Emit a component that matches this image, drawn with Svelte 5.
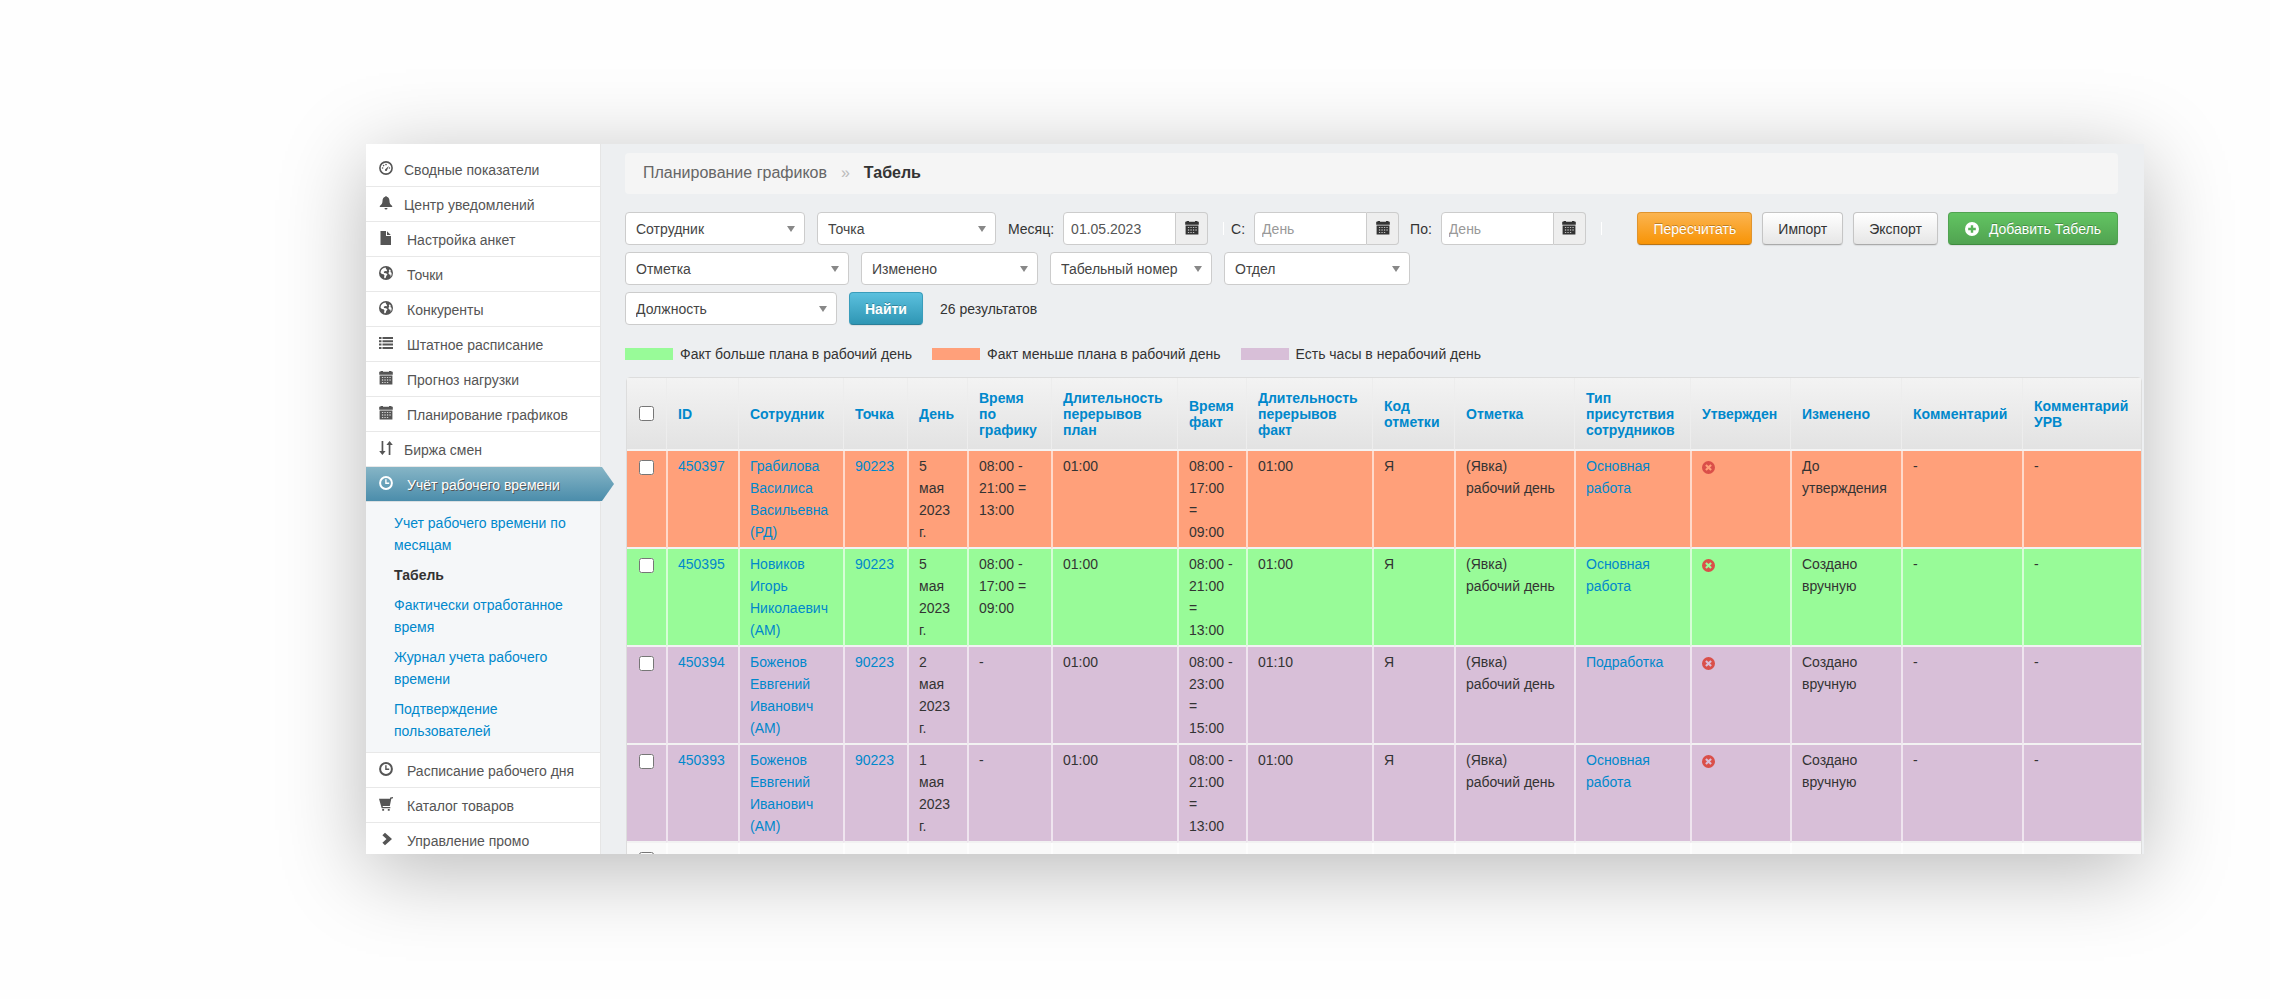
<script lang="ts">
  type Item = { icon: string; label: string; tight?: boolean };
  type Line = {
    id: string;
    tone: string;
    name: string;
    day: string;
    plan: string;
    fact: string;
    factBreak: string;
    kind: string;
    changed: string;
  };

  const before: Item[] = [
    { icon: "gauge", label: "Сводные показатели", tight: true },
    { icon: "bell", label: "Центр уведомлений", tight: true },
    { icon: "file", label: "Настройка анкет" },
    { icon: "globe", label: "Точки" },
    { icon: "globe", label: "Конкуренты" },
    { icon: "list", label: "Штатное расписание" },
    { icon: "calendar", label: "Прогноз нагрузки" },
    { icon: "calendar", label: "Планирование графиков" },
    { icon: "sort", label: "Биржа смен", tight: true },
  ];

  const after: Item[] = [
    { icon: "clock", label: "Расписание рабочего дня" },
    { icon: "cart", label: "Каталог товаров" },
    { icon: "chevron", label: "Управление промо" },
  ];

  const submenu = [
    "Учет рабочего времени по месяцам",
    "Табель",
    "Фактически отработанное время",
    "Журнал учета рабочего времени",
    "Подтверждение пользователей",
  ];

  const legend = [
    { tone: "green", text: "Факт больше плана в рабочий день" },
    { tone: "orange", text: "Факт меньше плана в рабочий день" },
    { tone: "purple", text: "Есть часы в нерабочий день" },
  ];

  const secondRow = [
    { label: "Отметка", width: 224 },
    { label: "Изменено", width: 177 },
    { label: "Табельный номер", width: 162 },
    { label: "Отдел", width: 186 },
  ];

  // first column is the checkbox, it has no title
  const columns = [
    { title: "", width: 39 },
    { title: "ID", width: 72 },
    { title: "Сотрудник", width: 105 },
    { title: "Точка", width: 64 },
    { title: "День", width: 60 },
    { title: "Время\nпо\nграфику", width: 84 },
    { title: "Длительность\nперерывов\nплан", width: 126 },
    { title: "Время\nфакт", width: 69 },
    { title: "Длительность\nперерывов\nфакт", width: 126 },
    { title: "Код\nотметки", width: 82 },
    { title: "Отметка", width: 120 },
    { title: "Тип\nприсутствия\nсотрудников", width: 116 },
    { title: "Утвержден", width: 100 },
    { title: "Изменено", width: 111 },
    { title: "Комментарий", width: 121 },
    { title: "Комментарий\nУРВ", width: 119 },
  ];

  const lines: Line[] = [
    {
      id: "450397", tone: "orange", name: "Грабилова\nВасилиса\nВасильевна\n(РД)", day: "5",
      plan: "08:00 -\n21:00 =\n13:00", fact: "08:00 -\n17:00\n=\n09:00", factBreak: "01:00",
      kind: "Основная\nработа", changed: "До\nутверждения",
    },
    {
      id: "450395", tone: "green", name: "Новиков\nИгорь\nНиколаевич\n(АМ)", day: "5",
      plan: "08:00 -\n17:00 =\n09:00", fact: "08:00 -\n21:00\n=\n13:00", factBreak: "01:00",
      kind: "Основная\nработа", changed: "Создано\nвручную",
    },
    {
      id: "450394", tone: "purple", name: "Боженов\nЕввгений\nИванович\n(АМ)", day: "2",
      plan: "-", fact: "08:00 -\n23:00\n=\n15:00", factBreak: "01:10",
      kind: "Подработка", changed: "Создано\nвручную",
    },
    {
      id: "450393", tone: "purple", name: "Боженов\nЕввгений\nИванович\n(АМ)", day: "1",
      plan: "-", fact: "08:00 -\n21:00\n=\n13:00", factBreak: "01:00",
      kind: "Основная\nработа", changed: "Создано\nвручную",
    },
  ];

  let month = $state("01.05.2023");
  let from = $state("");
  let to = $state("");
</script>

{#snippet icon(name: string)}
  <svg class="icon" viewBox="0 0 14 14" aria-hidden="true">
    {#if name === "gauge"}
      <circle cx="7" cy="7" r="6.1" fill="none" stroke="currentColor" stroke-width="1.6" />
      <path d="M6 8.6 9.8 5 7.9 9.4a1 1 0 0 1-1.9-.8z" />
      <circle cx="3.6" cy="7" r=".8" /><circle cx="4.6" cy="4.6" r=".8" />
      <circle cx="7" cy="3.6" r=".8" /><circle cx="10.4" cy="7" r=".8" />
    {:else if name === "bell"}
      <path d="M6.3 .7a.7.7 0 0 1 1.4 0C9.700 1.200 10.400 2.900 10.500 5c.1 2.200.6 3.400 2.700 5v1H.8v-1c2.100-1.600 2.600-2.800 2.700-5 .1-2.100.8-3.800 2.800-4.300zM5.500 12h3a1.500 1.500 0 0 1-3 0z" />
    {:else if name === "file"}
      <path d="M1.500 0H7v5h5v9H1.500zM8 .2 11.800 4H8z" />
    {:else if name === "globe"}
      <path fill-rule="evenodd" d="M7 0a7 7 0 1 1 0 14A7 7 0 0 1 7 0zm-.4 1.500C4 1.700 1.700 3.700 1.500 6.600l1.300 1.300 1.800.3.9 1.400-.5 1.700.9 1.100 1-.9.300-1.600 1.300-1.300-1.300-1.400-2.200-.3-.2-1.100 1.500-.8 1.300.3.600-1.300-1-.8zm4.200 1.700-1 1.200.5 1.300-1 1.200 1 1.500 1.200.4.100 1.900c.8-1 1.200-2.500.9-4l-1.100-.6.4-1.400z" />
    {:else if name === "list"}
      <path d="M0 1h2.500v2H0zm3.500 0H14v2H3.500zM0 4.300h2.500v2H0zm3.500 0H14v2H3.500zM0 7.600h2.500v2H0zm3.500 0H14v2H3.500zM0 10.900h2.500v2H0zm3.500 0H14v2H3.500z" />
    {:else if name === "calendar"}
      <path fill-rule="evenodd" d="M1.500 0h2.500v.8h6V0h2.500v.8h1.300v3H.2v-3h1.300zM.6 4.600h12.800v8.900H.6zm2.300 1.600v.8h1.300v-.8zm2.500 0v.8h1.300v-.8zm2.500 0v.8h1.300v-.8zm2.500 0v.8h1.300v-.8zM2.900 8.600v.8h1.300v-.8zm2.500 0v.8h1.300v-.8zm2.500 0v.8h1.300v-.8zm2.500 0v.8h1.300v-.8zM2.900 11v.8h1.300V11zm2.500 0v.8h1.300V11zm2.500 0v.8h1.300V11z" />
    {:else if name === "sort"}
      <path d="M2.600 0h1.700v10h2.300l-3.200 4-3.200-4h2.400zM9.700 14h1.700V4h2.400l-3.200-4-3.200 4h2.300z" />
    {:else if name === "clock"}
      <circle cx="7" cy="7" r="5.900" fill="none" stroke="currentColor" stroke-width="2" />
      <path d="M6.200 3.300h1.400v3.300h2.600V8h-4z" />
    {:else if name === "cart"}
      <path d="M11.200 .5 14 0v1.300l-1.700.4-1.500 7.200H3.600L3.900 10h7.400v1.200H2.700L0 1.700h10.900zM3.200 12h1.900v1.800H3.200zm5.600 0h1.900v1.800H8.800z" />
    {:else if name === "chevron"}
      <path d="M3.400 3.200 6 .8 13 7l-7 6.200-2.600-2.400L7.500 7z" />
    {:else if name === "plus"}
      <path fill-rule="evenodd" d="M7 0a7 7 0 1 1 0 14A7 7 0 0 1 7 0zM5.800 3.200v2.600H3.200v2.400h2.600v2.600h2.400V8.200h2.600V5.800H8.200V3.200z" />
    {:else if name === "cross"}
      <path fill-rule="evenodd" d="M7 0a7 7 0 1 1 0 14A7 7 0 0 1 7 0zM5 3.400 3.400 5l2 2-2 2L5 10.600l2-2 2 2L10.600 9l-2-2 2-2L9 3.400l-2 2z" />
    {/if}
  </svg>
{/snippet}

{#snippet dropdown(label: string, width: number)}
  <select aria-label={label} style:width="{width}px">
    <option>{label}</option>
  </select>
{/snippet}

{#snippet entry(item: Item)}
  <li>
    <a class="item" class:tight={item.tight} href="#menu">{@render icon(item.icon)}{item.label}</a>
  </li>
{/snippet}

<div class="stage">
  <div class="window">
    <nav class="sidebar">
      <ul>
        {#each before as item}
          {@render entry(item)}
        {/each}
        <li>
          <a class="item active" href="#menu">{@render icon("clock")}Учёт рабочего времени</a>
          <ul class="submenu">
            {#each submenu as title}
              <li><a class:current={title === "Табель"} href="#menu">{title}</a></li>
            {/each}
          </ul>
        </li>
        {#each after as item}
          {@render entry(item)}
        {/each}
      </ul>
    </nav>

    <main>
      <div class="crumbs">
        <a href="#plan">Планирование графиков</a>
        <span class="sep">»</span>
        <b>Табель</b>
      </div>

      <form class="filters" onsubmit={(e) => e.preventDefault()}>
        <div class="row">
          {@render dropdown("Сотрудник", 180)}
          {@render dropdown("Точка", 179)}
          <div class="date">
            <label for="month">Месяц:</label>
            <input id="month" type="text" bind:value={month} />
            <button type="button" class="addon" aria-label="Календарь">{@render icon("calendar")}</button>
          </div>
          <span class="bar"></span>
          <div class="date">
            <label for="from">С:</label>
            <input id="from" type="text" placeholder="День" bind:value={from} />
            <button type="button" class="addon" aria-label="Календарь">{@render icon("calendar")}</button>
          </div>
          <div class="date">
            <label for="to">По:</label>
            <input id="to" type="text" placeholder="День" bind:value={to} />
            <button type="button" class="addon" aria-label="Календарь">{@render icon("calendar")}</button>
          </div>
          <span class="bar"></span>
          <div class="actions">
            <button type="button" class="btn warning">Пересчитать</button>
            <button type="button" class="btn">Импорт</button>
            <button type="button" class="btn">Экспорт</button>
            <button type="button" class="btn success">{@render icon("plus")}Добавить Табель</button>
          </div>
        </div>
        <div class="row">
          {#each secondRow as f}
            {@render dropdown(f.label, f.width)}
          {/each}
        </div>
        <div class="row">
          {@render dropdown("Должность", 212)}
          <button class="btn info">Найти</button>
          <span class="count">26 результатов</span>
        </div>
      </form>

      <div class="legend">
        {#each legend as l}
          <span class="key"><i class={l.tone}></i>{l.text}</span>
        {/each}
      </div>

      <table>
        <colgroup>
          {#each columns as c}
            <col style:width="{c.width}px" />
          {/each}
        </colgroup>
        <thead>
          <tr>
            {#each columns as c}
              <th>
                {#if c.title}
                  <a href="#sort">{c.title}</a>
                {:else}
                  <input type="checkbox" aria-label="Выбрать все" />
                {/if}
              </th>
            {/each}
          </tr>
        </thead>
        <tbody>
          {#each lines as l (l.id)}
            <tr class={l.tone}>
              <td><input type="checkbox" aria-label={l.id} /></td>
              <td><a href="#row">{l.id}</a></td>
              <td><a href="#row">{l.name}</a></td>
              <td><a href="#row">90223</a></td>
              <td>{l.day + "\nмая\n2023\nг."}</td>
              <td>{l.plan}</td>
              <td>01:00</td>
              <td>{l.fact}</td>
              <td>{l.factBreak}</td>
              <td>Я</td>
              <td>{"(Явка)\nрабочий день"}</td>
              <td><a href="#row">{l.kind}</a></td>
              <td class="state">{@render icon("cross")}</td>
              <td>{l.changed}</td>
              <td>-</td>
              <td>-</td>
            </tr>
          {/each}
          <tr>
            {#each columns as c, i}
              <td>{#if i === 0}<input type="checkbox" aria-label="Выбрать" />{/if}</td>
            {/each}
          </tr>
        </tbody>
      </table>
    </main>
  </div>
</div>

<style>
  :global(body) {
    background: #fefefe;
  }
  .stage {
    box-sizing: border-box;
    height: 100vh;
    padding: 144px 126px 145px 366px;
    overflow: hidden;
    font: 14px/22px "Liberation Sans", Arial, sans-serif;
    color: #333;
  }
  .window {
    display: flex;
    height: 100%;
    overflow: hidden;
    background: #edeff1;
    box-shadow: 0 16px 80px rgba(0, 0, 0, 0.28);
  }
  a {
    color: #0088cc;
    text-decoration: none;
  }
  .icon {
    width: 14px;
    height: 14px;
    flex: none;
    fill: currentColor;
  }

  .sidebar {
    flex: none;
    width: 235px;
    box-sizing: border-box;
    padding-top: 8px;
    background: #fff;
    border-right: 1px solid #e5e5e5;
  }
  .sidebar ul {
    list-style: none;
    margin: 0;
    padding: 0;
  }
  .item {
    display: flex;
    align-items: center;
    gap: 14px;
    box-sizing: border-box;
    height: 35px;
    padding: 2px 0 0 13px;
    color: #555;
    border-bottom: 1px solid #e8e8e8;
    white-space: nowrap;
  }
  .item.tight {
    gap: 11px;
  }
  .item .icon {
    margin-bottom: 4px;
  }
  .item.active {
    position: relative;
    z-index: 1;
    height: 34px;
    margin-right: -14px;
    color: #fff;
    border: 0;
    background: linear-gradient(#86b5c6, #4b8dab);
    text-shadow: 1px 1px 0 #555;
    clip-path: polygon(0 0, calc(100% - 12px) 0, 100% 50%, calc(100% - 12px) 100%, 0 100%);
  }
  .sidebar .submenu {
    display: flex;
    flex-direction: column;
    gap: 8px;
    padding: 10px 20px 10px 28px;
    background: #f5f7f9;
    border-top: 1px solid #dadfe2;
    border-bottom: 1px solid #e8e8e8;
  }
  .submenu .current {
    color: #333;
    font-weight: bold;
  }

  main {
    flex: 1;
    min-width: 0;
    padding: 9px 2px 0 24px;
  }
  .crumbs {
    display: flex;
    gap: 14px;
    margin-right: 24px;
    padding: 9px 18px 10px;
    border-radius: 4px;
    background: #f5f5f5;
    font-size: 16px;
  }
  .crumbs a {
    color: #666;
  }
  .sep {
    color: #bbb;
  }

  .filters {
    display: flex;
    flex-direction: column;
    gap: 7px;
    margin: 18px 24px 0 0;
  }
  .row {
    display: flex;
    align-items: center;
    gap: 12px;
  }
  select,
  .date input {
    box-sizing: border-box;
    height: 33px;
    border: 1px solid #ccc;
    border-radius: 4px;
    background-color: #fff;
    font: inherit;
    color: #444;
  }
  select {
    appearance: none;
    padding: 0 24px 0 10px;
    background-image: url("data:image/svg+xml,%3Csvg xmlns='http://www.w3.org/2000/svg' width='8' height='6'%3E%3Cpath d='M0 0h8L4 6z' fill='%23888'/%3E%3C/svg%3E");
    background-repeat: no-repeat;
    background-position: right 9px center;
  }
  .date {
    display: flex;
    align-items: center;
  }
  .date label {
    margin-right: 9px;
  }
  .date input {
    width: 113px;
    padding: 0 7px;
    border-radius: 4px 0 0 4px;
    color: #555;
  }
  .date input::placeholder {
    color: #999;
  }
  .addon {
    box-sizing: border-box;
    display: grid;
    place-items: center;
    width: 32px;
    height: 33px;
    padding: 0 0 2px;
    border: 1px solid #ccc;
    border-left: 0;
    border-radius: 0 4px 4px 0;
    background: #eee;
    color: #333;
  }
  .date + .date {
    margin-left: -1px;
  }
  .bar {
    width: 1px;
    height: 13px;
    margin: 0 -5px 0 3px;
    background: #fff;
  }
  .actions {
    display: flex;
    gap: 10px;
    margin-left: auto;
  }
  .btn {
    display: flex;
    align-items: center;
    gap: 10px;
    box-sizing: border-box;
    height: 33px;
    padding: 0 15px;
    border: 1px solid #c5c5c5;
    border-bottom-color: #aaa;
    border-radius: 4px;
    background: linear-gradient(#fff, #e6e6e6);
    box-shadow: 0 1px 1px rgba(0, 0, 0, 0.08);
    font: inherit;
    color: #333;
    white-space: nowrap;
  }
  .btn.warning {
    border-color: #e0942e #e0942e #b87417;
    background: linear-gradient(#fbb450, #f89406);
  }
  .btn.success {
    padding: 0 16px;
    border-color: #51a351 #51a351 #3f8a3f;
    background: linear-gradient(#62c462, #51a351);
  }
  .btn.info {
    border-color: #3a9dbb #3a9dbb #2b7f99;
    background: linear-gradient(#5bc0de, #2f96b4);
    font-weight: bold;
  }
  .btn.warning,
  .btn.success,
  .btn.info {
    color: #fff;
    text-shadow: 0 -1px 0 rgba(0, 0, 0, 0.25);
  }
  .count {
    margin-left: 5px;
  }

  .legend {
    display: flex;
    gap: 20px;
    margin: 18px 0 12px;
  }
  .key {
    display: flex;
    align-items: center;
    gap: 7px;
  }
  .key i {
    width: 48px;
    height: 12px;
  }
  .green {
    background: #98fb98;
  }
  .orange {
    background: #ffa07a;
  }
  .purple {
    background: #d8bfd8;
  }

  table {
    width: calc(100% - 1px);
    margin-left: 1px;
    table-layout: fixed;
    border-collapse: separate;
    border-spacing: 0;
    border: 1px solid #ddd;
    border-radius: 4px 4px 0 0;
    background-color: #f9f9f9;
    white-space: pre-line;
  }
  thead tr {
    background: linear-gradient(#f3f3f3, #e2e2e2);
  }
  th {
    box-sizing: border-box;
    height: 73px;
    padding: 0 0 0 11px;
    border-bottom: 2px solid #f4f4f4;
    border-left: 1px solid #ededed;
    line-height: 16px;
    text-align: left;
  }
  td {
    box-sizing: border-box;
    height: 98px;
    padding: 4px 0 4px 10px;
    border-bottom: 2px solid #f2f2f2;
    border-left: 2px solid rgba(255, 255, 255, 0.6);
    vertical-align: top;
  }
  th:first-child,
  td:first-child {
    padding-left: 12px;
    border-left: 0;
  }
  input[type="checkbox"] {
    display: block;
    width: 15px;
    height: 15px;
    margin: 0;
  }
  td input[type="checkbox"] {
    margin-top: 5px;
  }
  .state {
    color: #da4f49;
  }
  .state .icon {
    display: block;
    width: 13px;
    height: 13px;
    margin-top: 6px;
  }
</style>
